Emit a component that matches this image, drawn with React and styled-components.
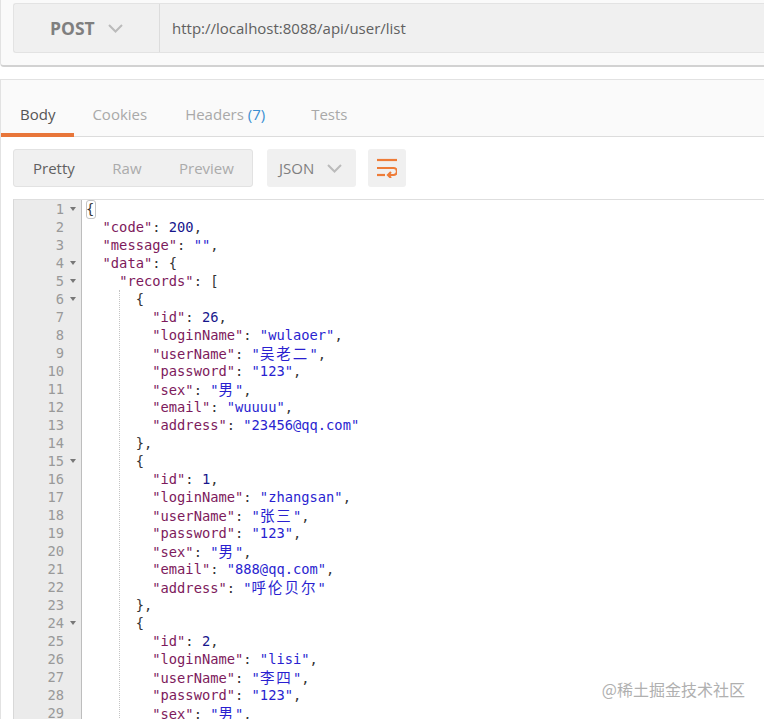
import React from "react";
import styled, { createGlobalStyle } from "styled-components";

const Global = createGlobalStyle`
  html, body { margin: 0; padding: 0; background: #fff; }
  body { font-family: "Open Sans", "Noto Sans", sans-serif; }
`;
const Page = styled.div`
  width: 764px; height: 719px; overflow: hidden; position: relative; background: #fff;
`;
const RequestPanel = styled.section`
  height: 67px; box-sizing: border-box; padding: 3px 0 0 12px;
  background: #fafafa; border-left: 1px solid #e2e2e2; border-bottom: 2px solid #d2d2d2;
  border-bottom-left-radius: 4px;
`;
const UrlBar = styled.div`
  height: 50px; display: flex; background: #f0f0f0; box-sizing: border-box;
  border: 1px solid #e3e3e3; border-right: 0; border-radius: 3px 0 0 3px;
`;
const Method = styled.div`
  width: 146px; flex: none; box-sizing: border-box; display: flex; align-items: center; gap: 13px;
  padding-left: 36px; border-right: 1px solid #dcdcdc; font-size: 17.5px; font-weight: 700; color: #7f7f7f;
`;
const Url = styled.div`
  padding-left: 12px; display: flex; align-items: center; font-size: 15px; color: #606060; white-space: nowrap;
`;
const ResponsePanel = styled.section`
  margin-top: 12px; border-top: 1px solid #e2e2e2; border-left: 1px solid #e2e2e2;
`;
const Tabs = styled.nav`
  height: 57px; box-sizing: border-box; background: #fafafa; border-bottom: 1px solid #dcdcdc;
  display: flex; align-items: flex-end;
`;
const Tab = styled.div`
  height: 36px; box-sizing: border-box; padding: 0 19px; font-size: 15px; line-height: 26px;
  color: ${p => (p.$active ? "#555" : "#a9a9a9")};
  margin-left: ${p => p.$nudge || 0}px;
  margin-right: ${p => p.$gap || 0}px;
  margin-bottom: -1px;
  border-bottom: 4px solid ${p => (p.$active ? "#e8763a" : "transparent")};
`;
const Count = styled.span`color: #3a8fd2;`;
const Toolbar = styled.div`
  display: flex; padding: 12px 0 12px 12px; gap: 14px; align-items: stretch; height: 38px;
`;
const ViewGroup = styled.div`
  width: 240px; box-sizing: border-box; display: flex; align-items: center; background: #f0f0f0;
  border: 1px solid #e2e2e2; border-radius: 3px; padding-left: 19px; font-size: 15px; gap: 37.5px;
`;
const ViewItem = styled.span`color: ${p => (p.$active ? "#606060" : "#ababab")};`;
const Select = styled.div`
  width: 89px; box-sizing: border-box; display: flex; align-items: center; gap: 13px; background: #f0f0f0;
  border-radius: 3px; padding-left: 12px; font-size: 15px; color: #7f7f7f;
`;
const WrapButton = styled.div`
  width: 38px; margin-left: -2px; display: flex; align-items: center; justify-content: center;
  background: #f0f0f0; border-radius: 3px;
`;
const Editor = styled.div`
  margin-left: 12px; display: flex; border-top: 1px solid #dedede; border-left: 1px solid #d8d8d8;
  font-family: "DejaVu Sans Mono", "Liberation Mono", "Noto Sans CJK SC", monospace;
  font-size: 13.75px; line-height: 18px;
`;
const Gutter = styled.div`
  width: 67px; flex: none; background: #ebebeb; border-right: 1px solid #bdbdbd; color: #999;
`;
const GutterRow = styled.div`
  height: 18px; display: grid; grid-template-columns: 50px 12px; column-gap: 6px; justify-content: start; text-align: right;
`;
const Fold = styled.span`
  align-self: center; justify-self: start; width: 0; height: 0;
  border-left: 3px solid transparent; border-right: 3px solid transparent; border-top: 4px solid #777;
  visibility: ${p => (p.$show ? "visible" : "hidden")};
`;
const Code = styled.div`
  position: relative; flex: 1; padding-left: 4px; color: #333; white-space: pre;
`;
const CodeRow = styled.div`height: 18px; position: relative;`;
const Guide = styled.div`
  position: absolute; left: 37px; top: 90px; bottom: 0; border-left: 1px dotted #c4c4c4;
`;
const Match = styled.span`
  position: absolute; left: 0; top: 0; width: 8px; height: 17px; border: 1px solid #c4c4c4; border-radius: 3px;
`;
const Key = styled.span`color: #7d1a5c;`;
const Str = styled.span`color: #2a1fd0;`;
const Num = styled.span`color: #16168c;`;
const Cjk = styled.span`
  font-family: "Noto Sans CJK SC", sans-serif; font-size: 14.5px; letter-spacing: 2px; color: #2a1fd0; line-height: 18px;
`;
const Watermark = styled.div`
  position: absolute; right: 19px; top: 679px; font-family: "Noto Sans CJK SC", sans-serif; font-size: 16px; line-height: 20px;
  color: #b0b0b0; text-shadow: 0 0 2px #fff;
`;

const Chevron = ({ color = "#bbb" }) => (
  <svg width="15" height="9" viewBox="0 0 15 9" fill="none">
    <path d="M1 1 L7.5 7.5 L14 1" stroke={color} strokeWidth="2" />
  </svg>
);
const WrapIcon = () => (
  <svg width="20" height="20" viewBox="0 0 20 20" fill="none" stroke="#ee7c38" strokeWidth="2.2">
    <path d="M0 2 H20" />
    <path d="M0 10 H16.5 A3.5 3.5 0 0 1 16.5 17 H11" />
    <path d="M14 14 L11 17 L14 20" />
    <path d="M0 17 H8" />
  </svg>
);

const user = (id, login, name, email, addr, close = true) => [
  `        "id": ${id},`,
  `        "loginName": "${login}",`,
  `        "userName": "${name}",`,
  `        "password": "123",`,
  `        "sex": "男",`,
  ...(close
    ? [`        "email": "${email}",`, `        "address": "${addr}"`, `      },`]
    : []),
];
const lines = [
  `{`,
  `  "code": 200,`,
  `  "message": "",`,
  `  "data": {`,
  `    "records": [`,
  `      {`,
  ...user(26, "wulaoer", "吴老二", "wuuuu", "23456@qq.com"),
  `      {`,
  ...user(1, "zhangsan", "张三", "888@qq.com", "呼伦贝尔"),
  `      {`,
  ...user(2, "lisi", "李四", "", "", false),
];
const folds = new Set([1, 4, 5, 6, 15, 24]);

const renderString = (s, k) => {
  const parts = s.split(/([\u4e00-\u9fff]+)/);
  return (
    <Str key={k}>
      {parts.map((p, i) => (i % 2 ? <Cjk key={i}>{p}</Cjk> : p))}
    </Str>
  );
};
const renderLine = text => {
  const re = /("[^"]*")(?=:)|("[^"]*")|(\b\d+\b)/g;
  const out = [];
  let last = 0, m, k = 0;
  while ((m = re.exec(text))) {
    if (m.index > last) out.push(text.slice(last, m.index));
    if (m[1]) out.push(<Key key={k++}>{m[1]}</Key>);
    else if (m[2]) out.push(renderString(m[2], k++));
    else out.push(<Num key={k++}>{m[3]}</Num>);
    last = m.index + m[0].length;
  }
  out.push(text.slice(last));
  return out;
};

export default function App() {
  return (
    <Page>
      <Global />
      <RequestPanel>
        <UrlBar>
          <Method>POST <Chevron /></Method>
          <Url>http://localhost:8088/api/user/list</Url>
        </UrlBar>
      </RequestPanel>
      <ResponsePanel>
        <Tabs>
          <Tab $active>Body</Tab>
          <Tab $nudge={-1}>Cookies</Tab>
          <Tab $gap={8}>Headers <Count>(7)</Count></Tab>
          <Tab>Tests</Tab>
        </Tabs>
        <Toolbar>
          <ViewGroup>
            <ViewItem $active>Pretty</ViewItem>
            <ViewItem>Raw</ViewItem>
            <ViewItem>Preview</ViewItem>
          </ViewGroup>
          <Select>JSON <Chevron /></Select>
          <WrapButton><WrapIcon /></WrapButton>
        </Toolbar>
        <Editor>
          <Gutter>
            {lines.map((_, i) => (
              <GutterRow key={i}>
                <span>{i + 1}</span>
                <Fold $show={folds.has(i + 1)} />
              </GutterRow>
            ))}
          </Gutter>
          <Code>
            <Guide />
            {lines.map((t, i) => (
              <CodeRow key={i}>
                {i === 0 && <Match />}
                {renderLine(t)}
              </CodeRow>
            ))}
          </Code>
        </Editor>
      </ResponsePanel>
      <Watermark>@稀土掘金技术社区</Watermark>
    </Page>
  );
}
